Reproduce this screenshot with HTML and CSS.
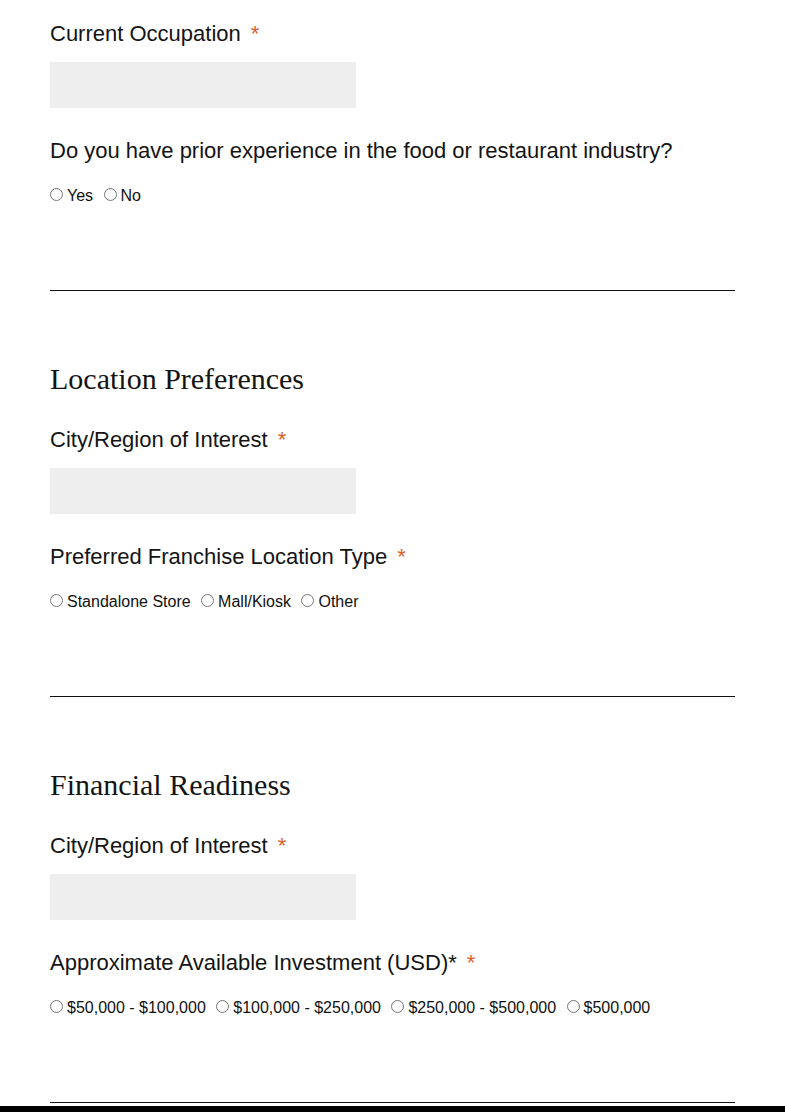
FILE: index.html
```html
<!DOCTYPE html>
<html>
<head>
<meta charset="utf-8">
<link rel="stylesheet" href="styles.css">
</head>
<body>
<div class="form">
  <div class="field">
    <label class="label">Current Occupation<span class="req">*</span></label>
    <input class="text" type="text">
  </div>
  <div class="field">
    <div class="label">Do you have prior experience in the food or restaurant industry?</div>
    <div class="radios">
      <label class="opt"><input type="radio" name="exp">Yes</label>
      <label class="opt"><input type="radio" name="exp">No</label>
    </div>
  </div>
  <hr class="rule">

  <section class="section">
    <h2 class="heading">Location Preferences</h2>
    <div class="field">
      <label class="label">City/Region of Interest<span class="req">*</span></label>
      <input class="text" type="text">
    </div>
    <div class="field">
      <div class="label">Preferred Franchise Location Type<span class="req">*</span></div>
      <div class="radios">
        <label class="opt"><input type="radio" name="loc">Standalone Store</label>
        <label class="opt"><input type="radio" name="loc">Mall/Kiosk</label>
        <label class="opt"><input type="radio" name="loc">Other</label>
      </div>
    </div>
  </section>
  <hr class="rule">

  <section class="section">
    <h2 class="heading">Financial Readiness</h2>
    <div class="field">
      <label class="label">City/Region of Interest<span class="req">*</span></label>
      <input class="text" type="text">
    </div>
    <div class="field">
      <div class="label">Approximate Available Investment (USD)*<span class="req">*</span></div>
      <div class="radios">
        <label class="opt"><input type="radio" name="inv">$50,000 - $100,000</label>
        <label class="opt"><input type="radio" name="inv">$100,000 - $250,000</label>
        <label class="opt"><input type="radio" name="inv">$250,000 - $500,000</label>
        <label class="opt"><input type="radio" name="inv">$500,000</label>
      </div>
    </div>
  </section>
  <hr class="rule">
</div>
<footer class="footer"></footer>
</body>
</html>
```

FILE: styles.css
```css
html, body {
  margin: 0;
  padding: 0;
  background: #ffffff;
}

body {
  font-family: "Liberation Sans", Arial, sans-serif;
  color: #141414;
}

.form {
  padding: 21px 50px 0 50px;
}

.field {
  margin-bottom: 30px;
}

.field:last-child {
  margin-bottom: 0;
}

.label {
  display: block;
  font-size: 22px;
  line-height: 26px;
  height: 26px;
  margin-bottom: 15px;
  white-space: nowrap;
}

.req {
  color: #d9622b;
  margin-left: 10px;
}

.text {
  display: block;
  box-sizing: border-box;
  width: 306px;
  height: 46px;
  border: none;
  background: #eeeeee;
  margin: 0;
  padding: 0 10px;
  font: 16px "Liberation Sans", Arial, sans-serif;
}

.radios {
  margin-top: 22px;
  height: 20px;
  line-height: 20px;
  font-size: 16px;
  color: #111;
  white-space: nowrap;
}

.opt {
  display: inline-flex;
  align-items: center;
}

.opt input {
  width: 13px;
  height: 13px;
  margin: 0 4px 3px 6px;
}

.opt:first-child input {
  margin-left: 0;
}

.rule {
  border: none;
  border-top: 1px solid #111;
  height: 0;
  margin: 84px 0 0 0;
}

.section {
  margin-top: 71px;
}

.heading {
  font-family: "Liberation Serif", "Times New Roman", serif;
  font-weight: normal;
  font-size: 30px;
  line-height: 34px;
  margin: 0 0 31px 0;
  color: #141414;
}

.footer {
  margin-top: 3px;
  height: 40px;
  background: #000;
}
```
